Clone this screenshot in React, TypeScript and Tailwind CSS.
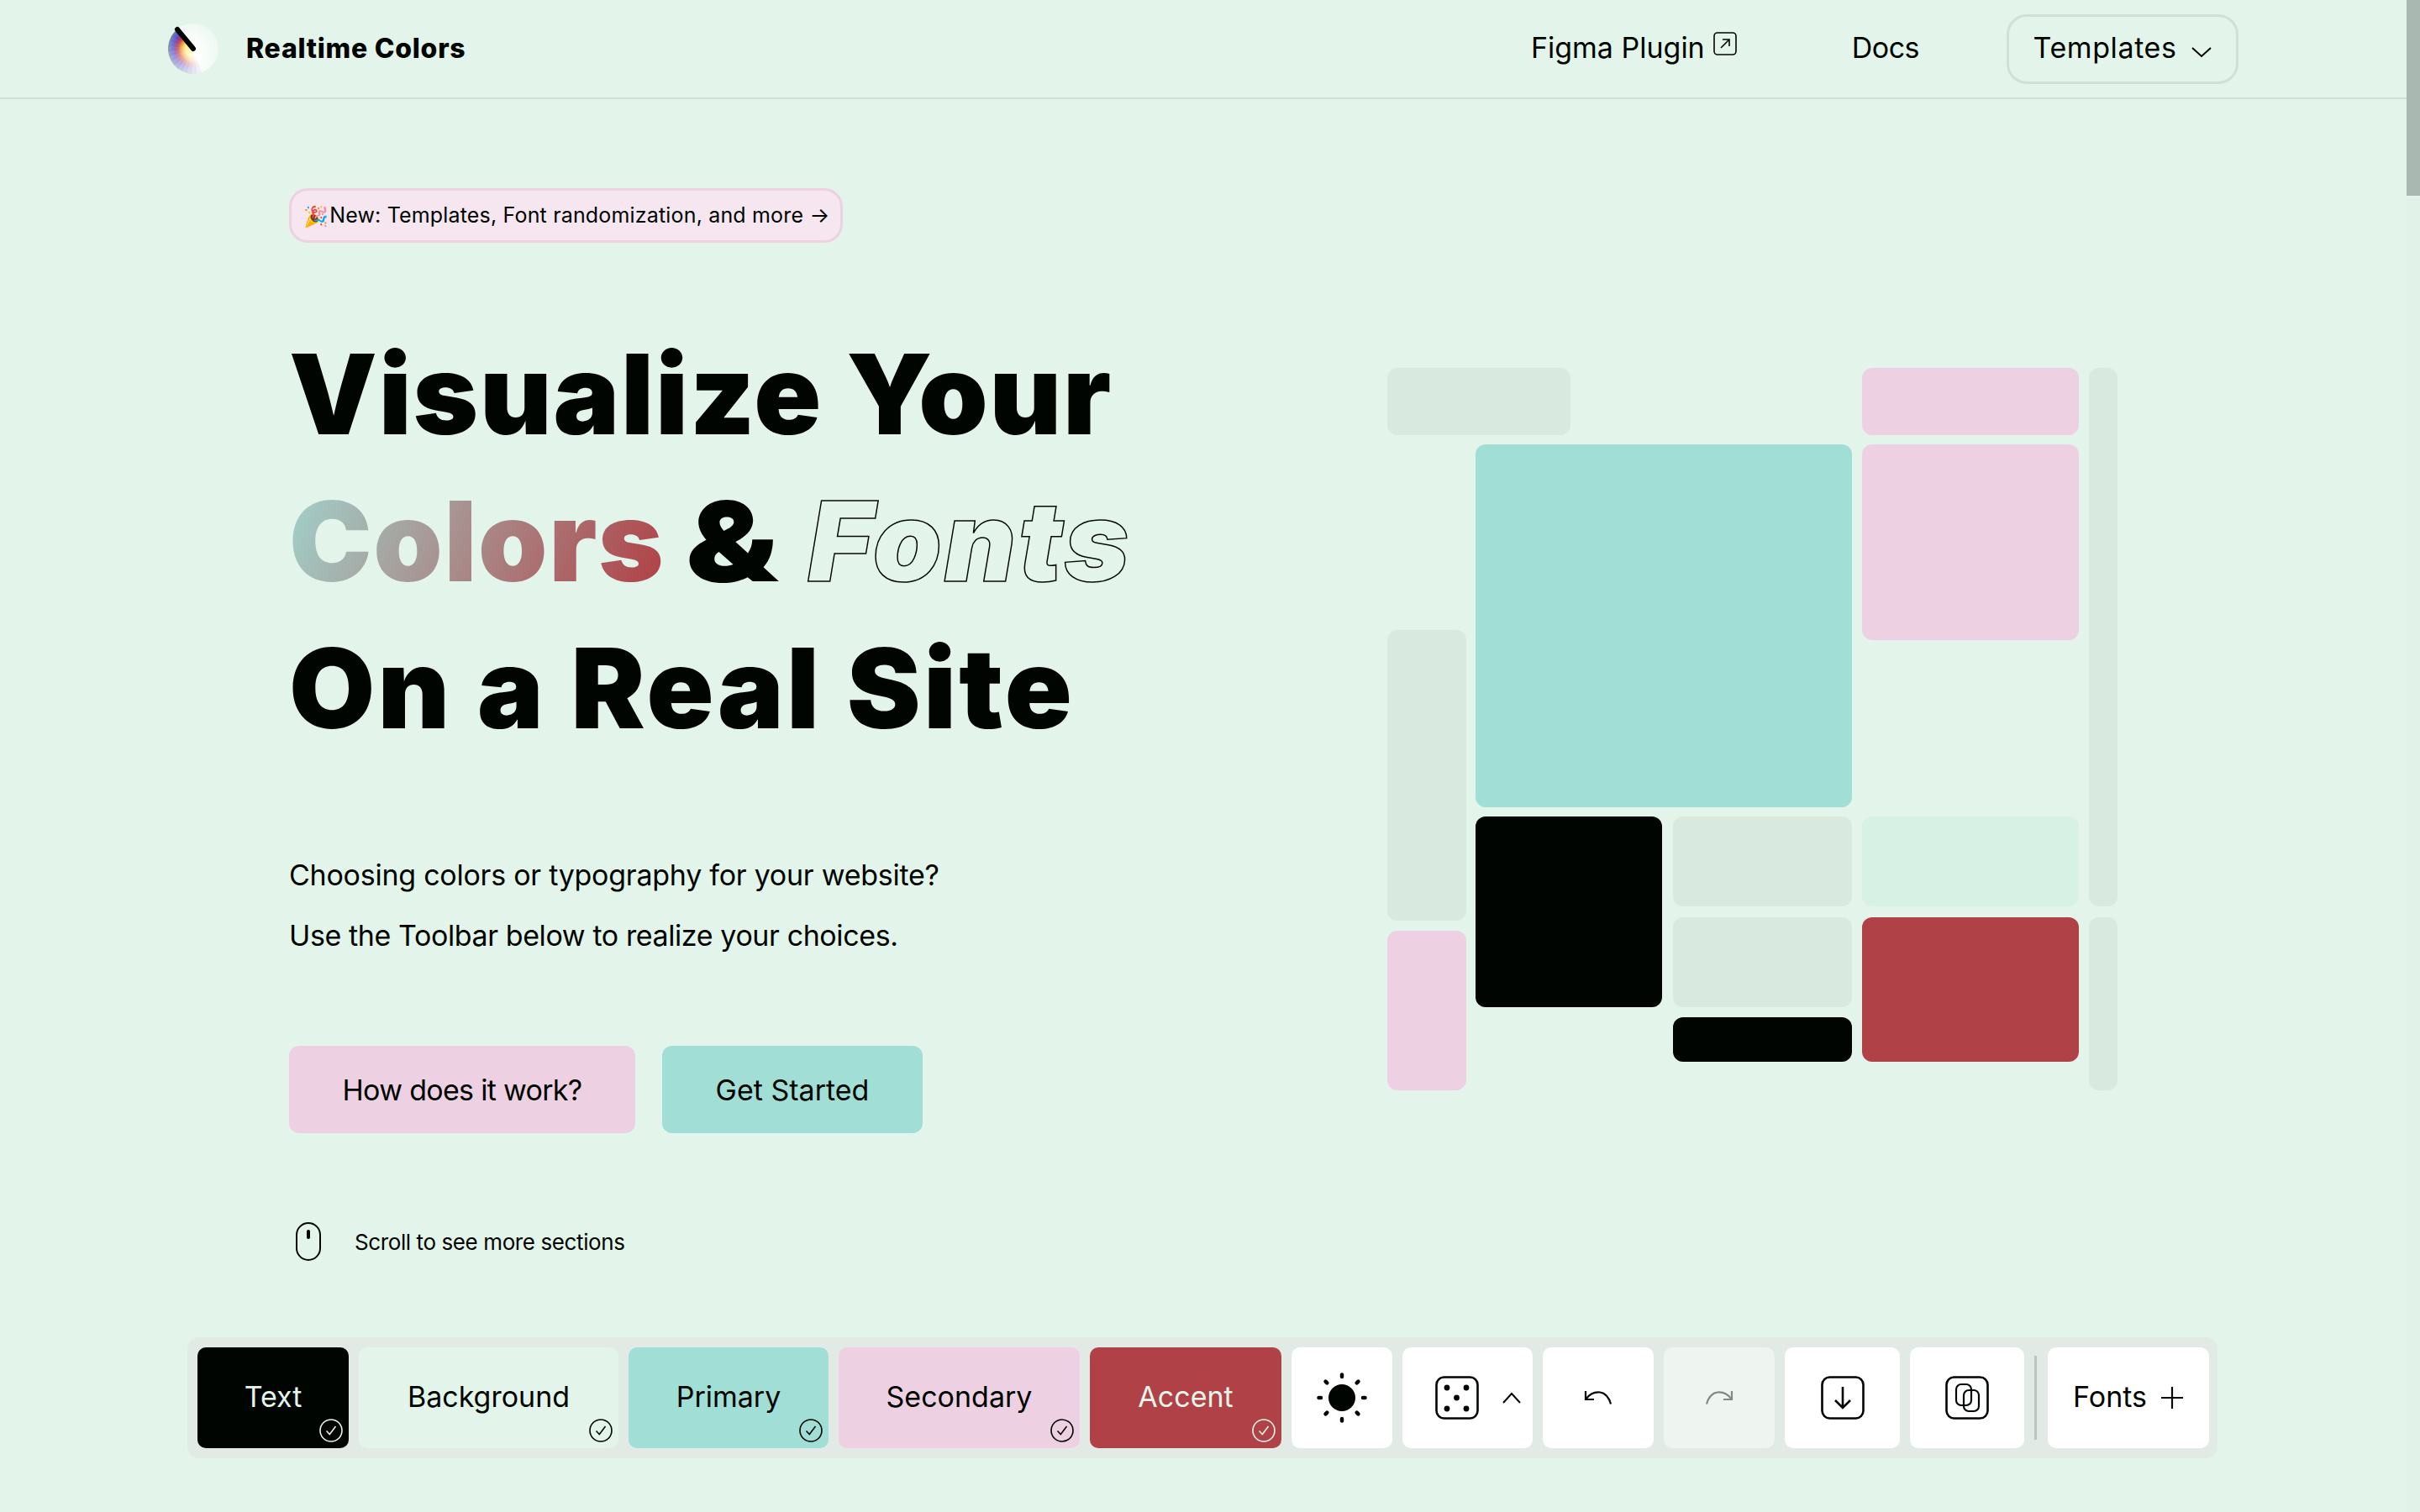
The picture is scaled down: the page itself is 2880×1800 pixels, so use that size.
const swatches = [
  { label: "Text", bg: "bg-[#010501]", fg: "text-[#E3F4EA]", w: "w-[180px]", check: "#E3F4EA" },
  { label: "Background", bg: "bg-[#E3F4EA]", fg: "text-[#010501]", w: "w-[309px]", check: "#010501" },
  { label: "Primary", bg: "bg-[#A0DED6]", fg: "text-[#010501]", w: "w-[238px]", check: "#010501" },
  { label: "Secondary", bg: "bg-[#EDD1E3]", fg: "text-[#010501]", w: "w-[287px]", check: "#010501" },
  { label: "Accent", bg: "bg-[#B04247]", fg: "text-[#E3F4EA]", w: "w-[228px]", check: "#E3F4EA" },
];

const tiles = [
  "col-[1/4] row-[1/2] bg-[#D8E9DF]",
  "col-[8/9] row-[1/2] bg-[#EDD1E3]",
  "col-[10/11] row-[1/8] bg-[#D8E9DF]",
  "col-[3/7] row-[3/6] bg-[#A0DED6]",
  "col-[8/9] row-[3/5] bg-[#EDD1E3]",
  "col-[1/2] row-[4/10] bg-[#D8E9DF]",
  "col-[1/2] row-[11/15] bg-[#EDD1E3]",
  "col-[3/5] row-[7/12] bg-[#010501]",
  "col-[6/7] row-[7/8] bg-[#D8E9DF]",
  "col-[8/9] row-[7/8] bg-[#D8F1E5]",
  "col-[6/7] row-[9/12] bg-[#D8E9DF]",
  "col-[6/7] row-[13/14] bg-[#010501]",
  "col-[8/9] row-[9/14] bg-[#B04247]",
  "col-[10/11] row-[9/15] bg-[#D8E9DF]",
];

function Logo() {
  const steps = 14;
  const wedge = (i: number) => {
    const a0 = ((232 - i * 11.5) * Math.PI) / 180;
    const a1 = ((232 - (i + 1) * 11.5 - 0.5) * Math.PI) / 180;
    return `M30 30L${30 + 30 * Math.cos(a0)} ${30 + 30 * Math.sin(a0)}A30 30 0 0 0 ${30 + 30 * Math.cos(a1)} ${30 + 30 * Math.sin(a1)}Z`;
  };
  return (
    <svg width="60" height="60" viewBox="0 0 60 60">
      <defs>
        <radialGradient id="fan" gradientUnits="userSpaceOnUse" cx="30" cy="30" r="30">
          <stop offset="0.3" stopColor="#fff27a" />
          <stop offset="0.45" stopColor="#f0a020" />
          <stop offset="0.6" stopColor="#c0302c" />
          <stop offset="0.72" stopColor="#7a2a90" />
          <stop offset="0.86" stopColor="#3f55e0" />
          <stop offset="1" stopColor="#777" />
        </radialGradient>
        <radialGradient id="disc" cx="0.35" cy="0.65" r="0.8">
          <stop offset="0.3" stopColor="#fff" />
          <stop offset="1" stopColor="#fff" stopOpacity="0.25" />
        </radialGradient>
      </defs>
      <circle cx="30" cy="30" r="30" fill="url(#disc)" />
      {Array.from({ length: steps }).map((_, i) => (
        <path key={i} d={wedge(i)} fill="url(#fan)" opacity={Math.max(0, 1 - i / steps)} />
      ))}
      <path d="M11 7L30 30" stroke="#010501" strokeWidth="6" strokeLinecap="round" />
    </svg>
  );
}

function CheckBadge({ color }: { color: string }) {
  return (
    <svg width="28" height="28" viewBox="0 0 28 28" fill="none" stroke={color} className="absolute bottom-[7px] right-[7px]">
      <circle cx="14" cy="14" r="13" strokeWidth="1.6" />
      <path d="M8.5 14.5l3.8 4L19.5 9" strokeWidth="1.6" />
    </svg>
  );
}

function Sun() {
  const spokes = [0, 45, 90, 135, 180, 225, 270, 315];
  return (
    <svg width="60" height="60" viewBox="-30 -30 60 60">
      <circle r="16" fill="#010501" />
      {spokes.map((d) => (
        <line key={d} x1="0" y1="-25" x2="0" y2="-27.5" stroke="#010501" strokeWidth="4.5" strokeLinecap="round" transform={`rotate(${d})`} />
      ))}
    </svg>
  );
}

function Dice() {
  const dots = [[14, 14], [37, 14], [25.5, 26], [14, 39], [37, 39]];
  return (
    <svg width="52" height="52" viewBox="0 0 52 52" fill="none">
      <rect x="1.5" y="1.5" width="49" height="49" rx="9" stroke="#010501" strokeWidth="2.6" />
      {dots.map(([x, y]) => (
        <circle key={`${x}-${y}`} cx={x} cy={y} r="3.4" fill="#010501" />
      ))}
    </svg>
  );
}

function Undo({ color, flip }: { color: string; flip?: boolean }) {
  return (
    <svg width="34" height="18" viewBox="0 0 34 18" fill="none" stroke={color} strokeWidth="2.2" className={flip ? "-scale-x-100" : ""}>
      <path d="M2 1v10h10" />
      <path d="M2 11C7 4 13 2 19 2.500c6 .5 11 6 13 14" />
    </svg>
  );
}

function DownloadIcon() {
  return (
    <svg width="52" height="52" viewBox="0 0 52 52" fill="none" stroke="#010501">
      <rect x="1.500" y="1.500" width="49" height="49" rx="9" strokeWidth="2.6" />
      <path d="M26 13v25M17 29l9 9 9-9" strokeWidth="2.6" />
    </svg>
  );
}

function CopyIcon() {
  return (
    <svg width="52" height="52" viewBox="0 0 52 52" fill="none" stroke="#010501" strokeWidth="2.2">
      <rect x="1.500" y="1.500" width="49" height="49" rx="9" strokeWidth="2.6" />
      <rect x="13" y="10" width="18" height="25" rx="6" />
      <rect x="22" y="17" width="18" height="25" rx="6" />
    </svg>
  );
}

export default function App() {
  return (
    <div className="flex h-screen w-full overflow-hidden bg-[#E3F4EA] font-['Inter',sans-serif] text-[#010501]">
      <main className="relative flex min-w-0 flex-1 flex-col">
        <header className="flex h-[118px] shrink-0 items-center justify-between border-b-2 border-[#CFE0D6] px-[200px]">
          <div className="flex items-center gap-[33px]">
            <Logo />
            <span className="text-[32px] font-extrabold tracking-[0.75px]">Realtime Colors</span>
          </div>
          <nav className="flex items-center">
            <a className="flex items-start gap-[10px] pb-[3px] text-[34px]">
              Figma Plugin
              <svg width="28" height="28" viewBox="0 0 28 28" fill="none" stroke="#010501" strokeWidth="1.6" className="mt-[7px]">
                <rect x="1" y="1" width="26" height="26" rx="4" />
                <path d="M9 19L19 9M11 9h8v8" />
              </svg>
            </a>
            <a className="ml-[137px] pb-[3px] text-[34px] tracking-[-0.5px]">Docs</a>
            <button className="ml-[104px] flex h-[83px] w-[276px] items-center justify-center gap-[16px] rounded-[24px] border-[3px] border-[#CFE0D6] pb-[3px] text-[34px] tracking-[0.6px]">
              Templates
              <svg width="26" height="14" viewBox="0 0 26 14" fill="none" stroke="#010501" strokeWidth="2" className="mt-[11px]">
                <path d="M2 2l11 10L24 2" />
              </svg>
            </button>
          </nav>
        </header>

        <section className="flex justify-between px-[344px]">
          <div className="pt-[106px]">
            <div className="flex h-[65px] w-[659px] items-center gap-[1px] rounded-[22px] border-[3px] border-[#EDD1E3] bg-[#F5E6F0] pl-[14px] text-[25px] tracking-[0.17px]">
              <span className="font-['Noto_Sans',sans-serif] text-[24px]">🎉</span>
              <span>New: Templates, Font randomization, and more →</span>
            </div>

            <h1 className="mt-[93px] text-[132px] font-black leading-[175px]">
              <div className="tracking-[1.8px]">Visualize Your</div>
              <div className="flex items-baseline tracking-[1.6px]">
                <span className="bg-[linear-gradient(115deg,#A0DED6_-6%,#B04247_96%)] bg-clip-text text-transparent">Colors</span>
                <span className="ml-[34px] inline-block scale-x-[1.2]">&amp;</span>
                <span className="ml-[43px] italic tracking-[2.5px] text-transparent [-webkit-text-stroke:1.5px_#010501]">Fonts</span>
              </div>
              <div className="tracking-[3.2px]">On a Real Site</div>
            </h1>

            <p className="mt-[99px] text-[34px] leading-[72px]">
              <span className="tracking-[-0.25px]">Choosing colors or typography for your website?</span>
              <br />
              <span className="tracking-[-0.4px]">Use the Toolbar below to realize your choices.</span>
            </p>

            <div className="mt-[95px] flex gap-[32px]">
              <button className="h-[104px] w-[412px] rounded-[12px] bg-[#EDD1E3] text-[34px] tracking-[-0.7px]">How does it work?</button>
              <button className="h-[104px] w-[310px] rounded-[12px] bg-[#A0DED6] text-[34px]">Get Started</button>
            </div>

            <div className="mt-[106px] flex items-center gap-[40px] pl-[8px] text-[26px] tracking-[-0.4px]">
              <svg width="30" height="46" viewBox="0 0 30 46" fill="none">
                <rect x="1" y="1" width="28" height="44" rx="14" stroke="#010501" strokeWidth="2" />
                <rect x="13" y="9" width="4" height="11" rx="2" fill="#010501" />
              </svg>
              <span>Scroll to see more sections</span>
            </div>
          </div>

          <div className="mt-[320px] grid h-fit grid-cols-[94px_11px_113px_109px_13px_213px_12px_258px_12px_34px] grid-rows-[80px_11px_221px_12px_199px_11px_107px_13px_4px_12px_91px_12px_53px_34px]">
            {tiles.map((t) => (
              <div key={t} className={`rounded-[12px] ${t}`} />
            ))}
          </div>
        </section>

        <div className="absolute bottom-16 left-[223px] flex h-[144px] w-[2416px] items-center gap-[12px] rounded-[14px] bg-[#E1EAE5] pl-[12px] pr-[10px]">
          {swatches.map((s) => (
            <button key={s.label} className={`relative h-[120px] shrink-0 rounded-[10px] pb-[3px] text-[34px] ${s.w} ${s.bg} ${s.fg}`}>
              {s.label}
              <CheckBadge color={s.check} />
            </button>
          ))}
          <button className="flex h-[120px] w-[120px] shrink-0 items-center justify-center rounded-[10px] bg-white"><Sun /></button>
          <button className="flex h-[120px] w-[155px] shrink-0 items-center gap-[27px] rounded-[10px] bg-white pl-[39px]">
            <Dice />
            <svg width="24" height="14" viewBox="0 0 24 14" fill="none" stroke="#010501" strokeWidth="2"><path d="M2 13L12 2l10 11" /></svg>
          </button>
          <button className="flex h-[120px] w-[132px] shrink-0 items-center justify-center rounded-[10px] bg-white"><Undo color="#010501" /></button>
          <button className="flex h-[120px] w-[132px] shrink-0 items-center justify-center rounded-[10px] bg-[#EEF4F0]"><Undo color="#7F8A84" flip /></button>
          <button className="flex h-[120px] w-[137px] shrink-0 items-center justify-center rounded-[10px] bg-white"><DownloadIcon /></button>
          <button className="flex h-[120px] w-[136px] shrink-0 items-center justify-center rounded-[10px] bg-white"><CopyIcon /></button>
          <div className="h-[100px] w-[3px] shrink-0 bg-[#B9C6BF]" />
          <button className="ml-[1px] flex h-[120px] w-[192px] shrink-0 items-center justify-center gap-[16px] rounded-[10px] bg-white pb-[3px] text-[34px]">
            Fonts
            <svg width="28" height="28" viewBox="0 0 28 28" fill="none" stroke="#010501" strokeWidth="2.2" className="mt-[3px]"><path d="M14 1v26M1 14h26" /></svg>
          </button>
        </div>
      </main>

      <aside className="h-full w-4 shrink-0 bg-[#E1F2E8]">
        <div className="h-[233px] bg-[#A9B8B0]" />
      </aside>
    </div>
  );
}
